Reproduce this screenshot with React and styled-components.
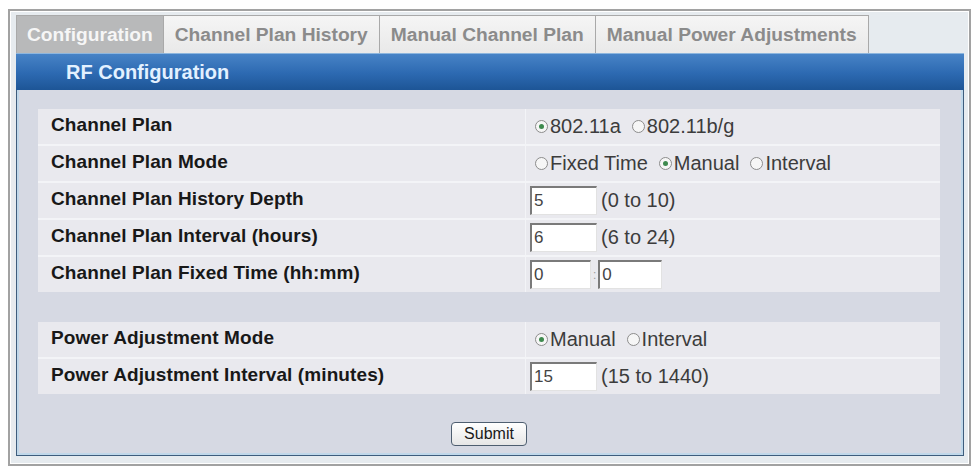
import React from "react";
import styled, { createGlobalStyle } from "styled-components";

const GlobalStyle = createGlobalStyle`
  body {
    margin: 0;
    background: #ffffff;
    font-family: "Liberation Sans", Arial, sans-serif;
  }
`;

const Frame = styled.div`
  box-sizing: border-box;
  margin: 9px 5px 0 8px;
  height: 457px;
  border: 2px solid #a2a2a2;
  box-shadow: inset 0 0 0 1px #ffffff;
  background: #e6ebef;
  padding: 4px 5px 8px 6px;
  display: flex;
  flex-direction: column;
`;

const TabBar = styled.div`
  display: flex;
  height: 38px;
`;

const Tab = styled.div`
  display: flex;
  align-items: center;
  padding: 0 ${p => (p.active ? 10 : 11)}px;
  margin-left: -1px;
  border: 1px solid #a9a9a9;
  border-bottom: none;
  font-size: 19.2px;
  font-weight: bold;
  color: ${p => (p.active ? "#f6f6f6" : "#8b8b8b")};
  background: ${p =>
    p.active ? "#b8b9ba" : "linear-gradient(#f5f5f5, #e9e9e9)"};

  &:first-child {
    margin-left: 0;
  }
`;

const Panel = styled.div`
  flex: 1;
  display: flex;
  flex-direction: column;
  border: 1px solid #3e5d7d;
  border-top: none;
  background: #d6d9e3;
  box-shadow: inset 2px 0 #c0d8ea, inset -2px 0 #c0d8ea, inset 0 -2px #c0d8ea;
`;

const Header = styled.div`
  height: 37px;
  margin: 0 -1px;
  padding-left: 50px;
  display: flex;
  align-items: center;
  font-size: 20px;
  font-weight: bold;
  color: #e3f1ff;
  border-top: 1px solid #8db6de;
  box-sizing: border-box;
  background: linear-gradient(#4783c6, #2c69b1 55%, #1d5596);
`;

const Body = styled.div`
  flex: 1;
  padding: 19px 23px 9px 21px;
  display: flex;
  flex-direction: column;
`;

const Group = styled.div`
  display: grid;
  grid-template-columns: 487px 1fr;
  gap: 2px 1px;
  background: #f3f4f7;
  margin-top: ${p => p.offset || 0}px;
`;

const Label = styled.div`
  height: 35px;
  padding: 0 0 3px 13px;
  box-sizing: border-box;
  display: flex;
  align-items: center;
  font-size: 19px;
  letter-spacing: 0.1px;
  font-weight: bold;
  color: #181818;
  background: #e9e9ee;
`;

const Value = styled.div`
  height: 35px;
  padding-left: ${p => p.inset || 4}px;
  box-sizing: border-box;
  display: flex;
  align-items: center;
  gap: ${p => p.gap || 0}px;
  font-size: 20px;
  color: #3c3c3c;
  background: #e9e9ee;
`;

const RadioItem = styled.span`
  display: inline-flex;
  align-items: center;
`;

const Dot = styled.span`
  width: 13px;
  height: 13px;
  box-sizing: border-box;
  border-radius: 50%;
  border: 1px solid #8c8c8c;
  background: #f6f6f6;
  margin-right: 2px;
  display: inline-flex;
  align-items: center;
  justify-content: center;

  &::after {
    content: "";
    width: 5px;
    height: 5px;
    border-radius: 50%;
    background: ${p => (p.checked ? "#3e8a4e" : "transparent")};
  }
`;

const Field = styled.input`
  width: ${p => p.w || 67}px;
  height: 29px;
  box-sizing: border-box;
  border: none;
  border-top: 2px solid #7a7a7a;
  border-left: 2px solid #7a7a7a;
  border-right: 1px solid #e2e2e2;
  border-bottom: 1px solid #e2e2e2;
  background: #ffffff;
  padding: 0 2px;
  font-family: "Liberation Sans", Arial, sans-serif;
  font-size: 17px;
  color: #444;
  outline: none;
`;

const Hint = styled.span`
  margin-left: 4px;
`;

const Colon = styled.span`
  font-size: 12px;
  color: #999;
  margin: 0 2px;
`;

const Actions = styled.div`
  margin-top: 28px;
  display: flex;
  justify-content: center;
`;

const SubmitButton = styled.button`
  width: 76px;
  height: 24px;
  border: 1px solid #4e5e70;
  border-radius: 4px;
  background: linear-gradient(#ffffff, #e6e6e6);
  font-family: "Liberation Sans", Arial, sans-serif;
  font-size: 16px;
  color: #1a1a1a;
  padding: 0;
`;

const Radios = ({ options, value }) => (
  <Value gap={11} inset={9}>
    {options.map(o => (
      <RadioItem key={o}>
        <Dot checked={o === value} />
        {o}
      </RadioItem>
    ))}
  </Value>
);

const NumberRow = ({ label, value, range }) => (
  <>
    <Label>{label}</Label>
    <Value>
      <Field defaultValue={value} />
      <Hint>{range}</Hint>
    </Value>
  </>
);

const App = () => (
  <>
    <GlobalStyle />
    <Frame>
      <TabBar>
        <Tab active>Configuration</Tab>
        <Tab>Channel Plan History</Tab>
        <Tab>Manual Channel Plan</Tab>
        <Tab>Manual Power Adjustments</Tab>
      </TabBar>
      <Panel>
        <Header>RF Configuration</Header>
        <Body>
          <Group>
            <Label>Channel Plan</Label>
            <Radios options={["802.11a", "802.11b/g"]} value="802.11a" />
            <Label>Channel Plan Mode</Label>
            <Radios options={["Fixed Time", "Manual", "Interval"]} value="Manual" />
            <NumberRow label="Channel Plan History Depth" value="5" range="(0 to 10)" />
            <NumberRow label="Channel Plan Interval (hours)" value="6" range="(6 to 24)" />
            <Label>Channel Plan Fixed Time (hh:mm)</Label>
            <Value>
              <Field w={61} defaultValue="0" />
              <Colon>:</Colon>
              <Field w={64} defaultValue="0" />
            </Value>
          </Group>
          <Group offset={30}>
            <Label>Power Adjustment Mode</Label>
            <Radios options={["Manual", "Interval"]} value="Manual" />
            <NumberRow label="Power Adjustment Interval (minutes)" value="15" range="(15 to 1440)" />
          </Group>
          <Actions>
            <SubmitButton>Submit</SubmitButton>
          </Actions>
        </Body>
      </Panel>
    </Frame>
  </>
);

export default App;
